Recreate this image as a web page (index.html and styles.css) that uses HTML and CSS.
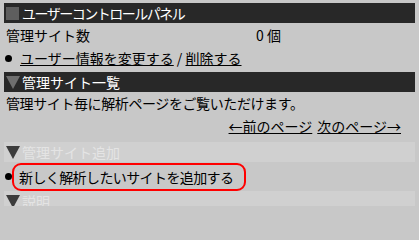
FILE: index.html
```html
<!DOCTYPE html>
<html lang="ja">
<head>
<meta charset="utf-8">
<title>ユーザーコントロールパネル</title>
<link rel="stylesheet" href="styles.css">
</head>
<body>
<div class="page">
  <div class="bar">
    <span class="sq"></span>
    <span class="bar-title narrow">ユーザーコントロールパネル</span>
  </div>
  <div class="stat">
    <span class="stat-label">管理サイト数</span>
    <span class="stat-value">0 個</span>
  </div>
  <div class="item">
    <span class="dot"></span>
    <span><a href="#" class="link">ユーザー情報を変更する</a> / <a href="#" class="link">削除する</a></span>
  </div>
  <div class="bar bar-second">
    <svg class="tri" width="14" height="14" viewBox="0 0 14 14"><polygon points="0,1 14,1 7,14" fill="#6e6e6e"/></svg>
    <span class="bar-title">管理サイト一覧</span>
  </div>
  <p class="para">管理サイト毎に解析ページをご覧いただけます。</p>
  <div class="nav">
    <a href="#" class="link">←前のページ</a>
    <a href="#" class="link">次のページ→</a>
  </div>
  <div class="band">
    <svg class="tri" width="14" height="14" viewBox="0 0 14 14"><polygon points="0,1 14,1 7,14" fill="#3c3c3c"/></svg>
    <span class="band-title">管理サイト追加</span>
  </div>
  <div class="item boxed-item">
    <span class="dot"></span>
    <span class="box">新しく解析したいサイトを追加する</span>
  </div>
  <div class="band">
    <svg class="tri" width="14" height="14" viewBox="0 0 14 14"><polygon points="0,1 14,1 7,14" fill="#3c3c3c"/></svg>
    <span class="band-title">説明</span>
  </div>
</div>
</body>
</html>
```
FILE: styles.css
```css
html, body {
  margin: 0;
  padding: 0;
  background: #c8c8c8;
  height: 206px;
  overflow: hidden;
}
body {
  font-family: "Noto Sans CJK JP", "Noto Sans", sans-serif;
  font-size: 14px;
  color: #000;
}
.page {
  padding: 3px 4px 0 4px;
}
.bar {
  height: 20px;
  background: #282828;
  color: #fff;
  display: flex;
  align-items: center;
  padding-left: 2px;
  gap: 2px;
}
.sq {
  width: 13px;
  height: 13px;
  background: #5e5e5e;
  margin-right: 1px;
}
.bar-title {
  line-height: 20px;
  white-space: nowrap;
}
.narrow {
  letter-spacing: -1.5px;
}
.tri {
  display: block;
  flex: none;
}
.stat {
  height: 23px;
  display: grid;
  grid-template-columns: 250px auto;
  align-items: center;
  padding-left: 2px;
}
.item {
  height: 24px;
  display: flex;
  align-items: center;
  padding-left: 1px;
  gap: 8px;
}
.dot {
  width: 7px;
  height: 7px;
  border-radius: 50%;
  background: #000;
  flex: none;
}
.link {
  color: #000;
  text-decoration: underline;
}
.bar-second {
  margin-top: 2px;
}
.para {
  margin: 0;
  height: 22px;
  line-height: 22px;
  padding-left: 2px;
  letter-spacing: -0.4px;
  white-space: nowrap;
}
.nav {
  height: 24px;
  display: flex;
  justify-content: flex-end;
  align-items: center;
  gap: 5px;
  padding-right: 14px;
  margin-bottom: 4px;
}
.band {
  height: 20px;
  background: #d0d0d0;
  color: #e4e4e4;
  display: flex;
  align-items: center;
  padding-left: 2px;
  gap: 2px;
}
.band-title {
  line-height: 20px;
}
.boxed-item {
  height: 29px;
  gap: 0;
}
.box {
  height: 24px;
  line-height: 24px;
  border: 2px solid #ff0000;
  border-radius: 9px;
  padding: 0 11px 0 5px;
  letter-spacing: -0.6px;
  white-space: nowrap;
}
```
